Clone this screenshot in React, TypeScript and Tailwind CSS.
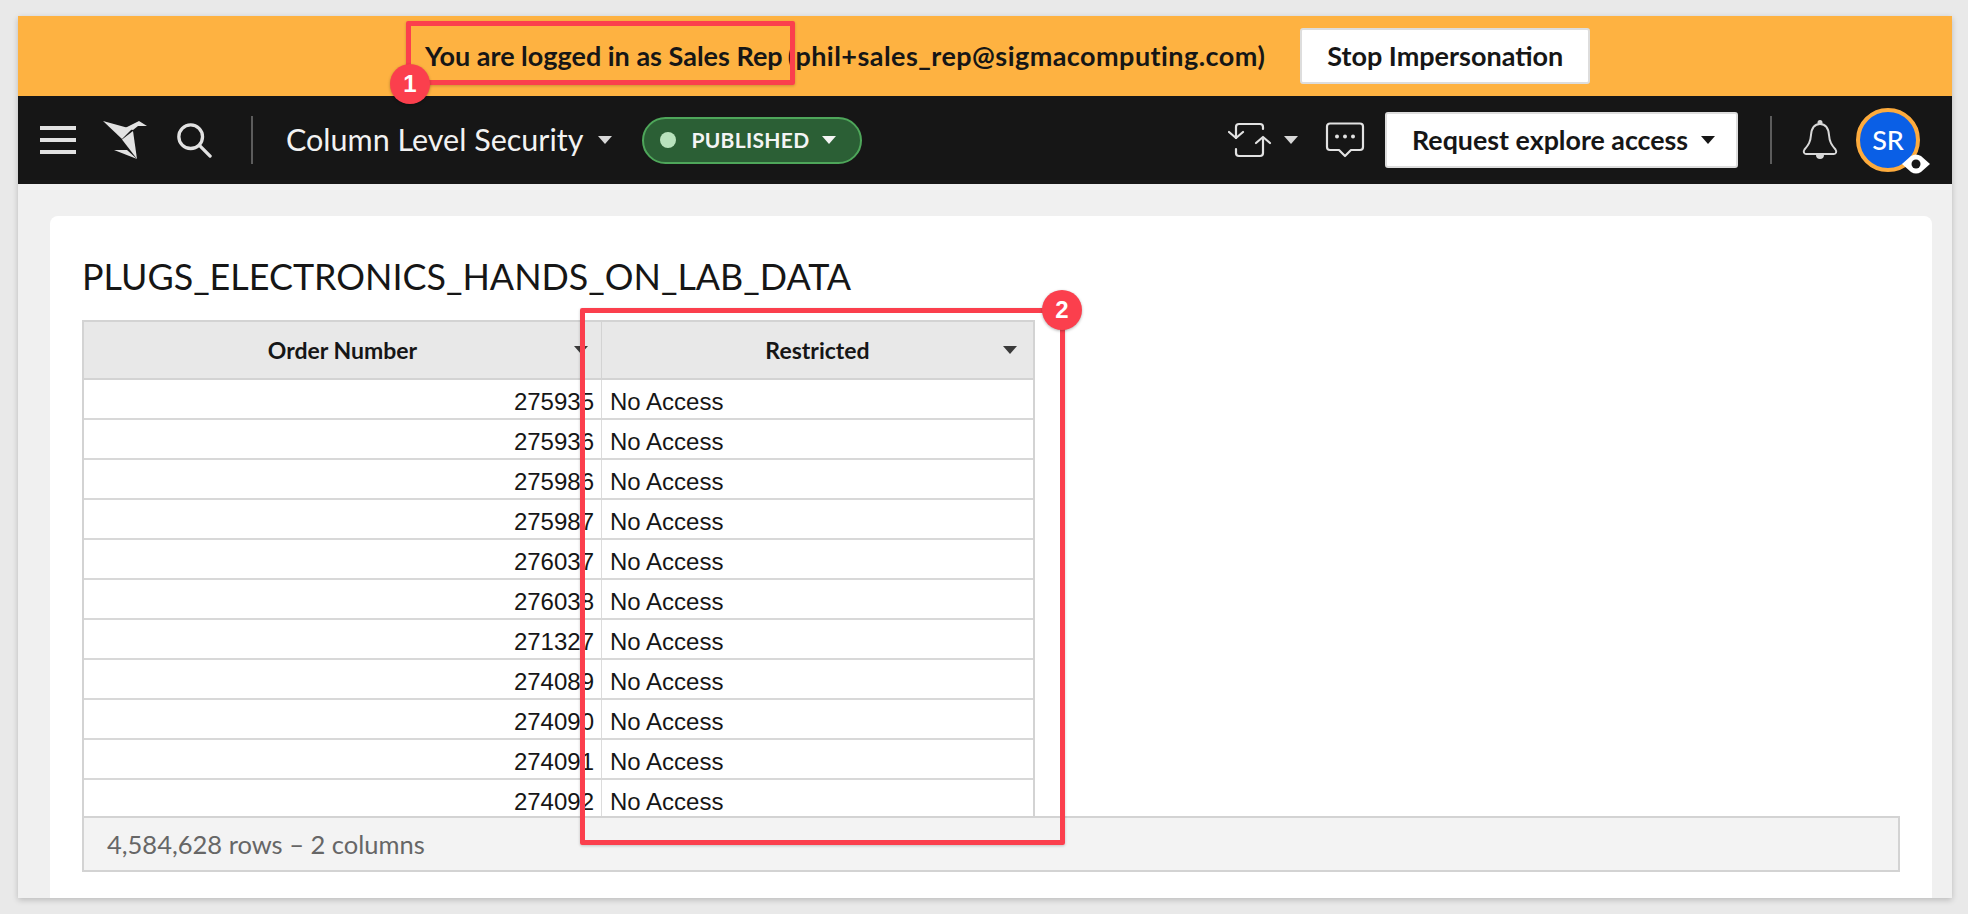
import { ReactNode } from "react";

const rows = ["275935", "275936", "275986", "275987", "276037", "276038", "271327", "274089", "274090", "274091", "274092"];

function Caret({ color = "#d8d8d8", className = "" }: { color?: string; className?: string }) {
  return (
    <svg width="14" height="8" viewBox="0 0 14 8" className={className}>
      <path d="M0 0H14L7 8Z" fill={color} />
    </svg>
  );
}

function Logo() {
  return (
    <svg width="50" height="44" viewBox="100 118 50 44">
      <path d="M103 121L132 129L122 139Z" fill="#e2e2e2" />
      <path d="M125 128L139 121L147 126L138 126L133 130Z" fill="#e2e2e2" />
      <path d="M122 139.500L133 131L137 159Z" fill="#e2e2e2" />
      <path d="M114 150L127 150L137 159Z" fill="#e2e2e2" />
    </svg>
  );
}

function SyncIcon() {
  return (
    <svg width="44" height="36" viewBox="0 0 44 36" fill="none" stroke="#e2e2e2" strokeWidth="2.200" strokeLinecap="round" strokeLinejoin="round">
      <path d="M8 16V5a3 3 0 0 1 3-3h21a3 3 0 0 1 3 3v2" />
      <path d="M1 10l7 6 7-6" />
      <path d="M35 17v14a3 3 0 0 1-3 3H11a3 3 0 0 1-3-3v-4" />
      <path d="M28 21l7-6 7 6" />
    </svg>
  );
}

function ChatIcon() {
  return (
    <svg width="40" height="36" viewBox="0 0 40 36" fill="none">
      <path d="M5 1.500H35a3 3 0 0 1 3 3V25a3 3 0 0 1-3 3H26l-6 6-6-6H5a3 3 0 0 1-3-3V4.500a3 3 0 0 1 3-3Z" stroke="#e2e2e2" strokeWidth="2.200" strokeLinejoin="round" />
      <circle cx="12" cy="14.500" r="2" fill="#e2e2e2" />
      <circle cx="20" cy="14.500" r="2" fill="#e2e2e2" />
      <circle cx="28" cy="14.500" r="2" fill="#e2e2e2" />
    </svg>
  );
}

function BellIcon() {
  return (
    <svg width="36" height="42" viewBox="0 0 36 42" fill="none">
      <circle cx="18" cy="3.500" r="2.500" fill="#d8d8d8" />
      <path d="M18 5c-6 0-8.500 5-9 11-.5 7-2.500 10-6.500 14.500C1 32.500 2 35 4 35h28c2 0 3-2.500 1.500-4.500C29.500 26 27.500 23 27 16c-.5-6-3-11-9-11Z" stroke="#d8d8d8" strokeWidth="2" />
      <path d="M14 36h8c0 2.500-1.500 4-4 4s-4-1.500-4-4Z" fill="#d8d8d8" />
    </svg>
  );
}

function EyeBadge() {
  return (
    <svg width="28" height="22" viewBox="0 0 28 22" className="absolute left-[42px] top-[41px]">
      <path d="M0 11L9 3Q14 0 19 3L28 11L19 19Q14 22 9 19Z" fill="#ffffff" />
      <circle cx="14" cy="11" r="4.500" fill="#161616" />
    </svg>
  );
}

function Badge({ children, className }: { children: ReactNode; className: string }) {
  return (
    <div className={"absolute flex h-10 w-10 items-center justify-center rounded-full bg-[#fb3f4d] font-['Liberation_Sans',sans-serif] text-[24px] font-bold text-white shadow-[0_1px_3px_rgba(0,0,0,0.3)] " + className}>
      {children}
    </div>
  );
}

export default function App() {
  return (
    <div className="relative h-[914px] w-[1968px] overflow-hidden bg-[#e9e9e9] pt-4 pl-[18px] font-['Lato',sans-serif]">
      <div className="flex h-[882px] w-[1934px] flex-col bg-[#f0f0f0] shadow-[0_2px_6px_rgba(0,0,0,0.2)]">
        {/* impersonation banner */}
        <div className="flex h-20 shrink-0 items-center bg-[#feb241] pl-[407px] text-[27px] font-bold text-[#161616]">
          <span>You are logged in as Sales Rep</span>
          <span className="ml-[5px] tracking-[0.45px]">(phil+sales_rep@sigmacomputing.com)</span>
          <button className="ml-[35px] flex h-[56px] w-[290px] items-center justify-center rounded-[3px] border-2 border-[#dddddd] bg-white text-[27px] font-bold text-[#161616]">
            Stop Impersonation
          </button>
        </div>

        {/* nav */}
        <div className="flex h-[88px] shrink-0 items-center bg-[#161616] text-white">
          <div className="ml-[22px] flex h-7 w-9 flex-col justify-between">
            <div className="h-1 bg-[#e2e2e2]" />
            <div className="h-1 bg-[#e2e2e2]" />
            <div className="h-1 bg-[#e2e2e2]" />
          </div>
          <div className="ml-[24px]">
            <Logo />
          </div>
          <svg width="36" height="36" viewBox="0 0 38 38" fill="none" stroke="#e2e2e2" strokeWidth="3.500" strokeLinecap="round" className="ml-[26px]">
            <circle cx="15.500" cy="15.500" r="12.500" />
            <path d="M25 25L36 36" />
          </svg>
          <div className="ml-[39px] h-12 w-0.5 bg-[#5c5c5c]" />
          <span className="ml-[33px] text-[30.500px] text-[#f2f2f2]">Column Level Security</span>
          <Caret className="ml-[15px]" />
          <div className="ml-[30px] flex h-[47px] w-[220px] items-center rounded-full border-2 border-[#4ea65a] bg-[#2b5f35] pl-[16px]">
            <div className="h-4 w-4 rounded-full bg-[#b9e2bd]" />
            <span className="ml-[15px] text-[21px] font-bold tracking-[0.3px] text-[#f4f4f4]">PUBLISHED</span>
            <Caret color="#f4f4f4" className="ml-[13px]" />
          </div>
          <div className="ml-auto flex items-center">
            <SyncIcon />
            <Caret className="ml-[12px]" />
            <div className="ml-[27px]">
              <ChatIcon />
            </div>
            <button className="ml-[20px] flex h-14 w-[353px] items-center rounded-[3px] border-2 border-[#dddddd] bg-white pl-[25px] text-[26.800px] font-bold text-[#161616]">
              Request explore access
              <Caret color="#161616" className="ml-[13px]" />
            </button>
            <div className="ml-[32px] h-12 w-0.5 bg-[#5c5c5c]" />
            <div className="ml-[30px]">
              <BellIcon />
            </div>
            <div className="relative ml-[18px] mr-[32px] flex h-16 w-16 items-center justify-center rounded-full border-4 border-[#fdab3d] bg-[#0a5fe6] text-[27px] font-medium text-white">
              SR
              <EyeBadge />
            </div>
          </div>
        </div>

        {/* card */}
        <div className="ml-[32px] mr-[20px] mt-8 flex flex-1 flex-col rounded-t-lg bg-white pl-[32px] pr-[32px]">
          <h1 className="mt-[40px] h-[42px] text-[35.900px] leading-[42px] text-[#161616]">PLUGS_ELECTRONICS_HANDS_ON_LAB_DATA</h1>
          <div className="mt-[22px] h-[496px] w-[953px] overflow-hidden border-x-2 border-[#d3d3d3] font-['Liberation_Sans',sans-serif]">
            <div className="flex h-[60px] border-y-2 border-[#d3d3d3] bg-[#e8e8e8] font-['Lato',sans-serif] text-[23px] font-bold text-[#161616]">
              <div className="relative flex w-[518px] items-center justify-center border-r border-[#d3d3d3]">
                Order Number
                <Caret color="#3a3a3a" className="absolute right-[13px] top-[24px]" />
              </div>
              <div className="relative flex flex-1 items-center justify-center">
                Restricted
                <Caret color="#3a3a3a" className="absolute right-[16px] top-[24px]" />
              </div>
            </div>
            {rows.map((r) => (
              <div key={r} className="flex h-10 border-b-2 border-[#d8d8d8] text-[24px] text-[#161616]">
                <div className="flex w-[518px] items-center justify-end border-r border-[#dcdcdc] pr-[7px] pt-[5px]">{r}</div>
                <div className="flex flex-1 items-center pl-2 pt-[5px]">No Access</div>
              </div>
            ))}
          </div>
          <div className="flex h-14 items-center border-2 border-[#d3d3d3] bg-[#f3f3f3] pl-[23px] text-[25.500px] text-[#666666]">
            4,584,628 rows – 2 columns
          </div>
        </div>
      </div>

      {/* annotations over the page */}
      <div className="absolute left-[406px] top-[21px] h-[64px] w-[389px] rounded-[2px] border-[5px] border-[#fb3f4d] shadow-[0_1px_3px_rgba(0,0,0,0.2)]" />
      <Badge className="left-[390px] top-[64px]">1</Badge>
      <div className="absolute left-[580px] top-[308px] h-[537px] w-[485px] rounded-[2px] border-[5px] border-[#fb3f4d] shadow-[0_1px_3px_rgba(0,0,0,0.2)]" />
      <Badge className="left-[1042px] top-[290px]">2</Badge>
    </div>
  );
}
